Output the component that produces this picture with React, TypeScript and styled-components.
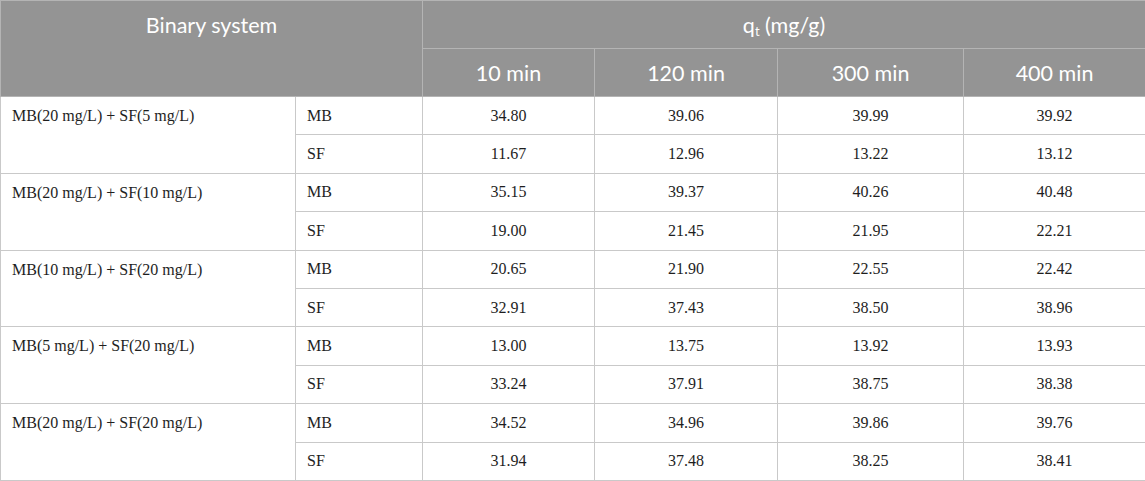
import React from "react";
import styled, { createGlobalStyle } from "styled-components";

const Global = createGlobalStyle`
  html, body { margin: 0; padding: 0; background: #ffffff; }
  #root { width: 1145px; }
`;

const Table = styled.table`
  width: 1145px;
  border-collapse: collapse;
  table-layout: fixed;
  border: 1px solid #c9c9c9;
`;

const HeadRow = styled.tr`
  height: 48px;
`;

const HeadCell = styled.th<{ $top?: boolean }>`
  background: #949494;
  color: #ffffff;
  font-family: Lato, "Liberation Sans", sans-serif;
  font-weight: 400;
  font-size: 21.5px;
  padding: ${(p) => (p.$top ? "11px 10px 0" : "0 10px")};
  box-sizing: border-box;
  text-align: center;
  vertical-align: ${(p) => (p.$top ? "top" : "middle")};
  border: 1px solid #b4b4b4;
  line-height: 26px;
`;

const Sub = styled.sub`
  font-size: 13px;
  vertical-align: -3px;
  line-height: 0;
`;

const Row = styled.tr`
  height: 38.4px;
`;

const Cell = styled.td<{ $center?: boolean }>`
  font-family: "Liberation Serif", "Times New Roman", serif;
  font-size: 16px;
  color: #1e1e1e;
  padding: 0 11px;
  box-sizing: border-box;
  border: 1px solid #c9c9c9;
  text-align: ${(p) => (p.$center ? "center" : "left")};
  vertical-align: middle;
  line-height: 20px;
`;

const GroupCell = styled(Cell)`
  vertical-align: top;
  padding-top: 9px;
`;

const groups = [
  {
    label: "MB(20 mg/L) + SF(5 mg/L)",
    rows: [
      ["MB", "34.80", "39.06", "39.99", "39.92"],
      ["SF", "11.67", "12.96", "13.22", "13.12"],
    ],
  },
  {
    label: "MB(20 mg/L) + SF(10 mg/L)",
    rows: [
      ["MB", "35.15", "39.37", "40.26", "40.48"],
      ["SF", "19.00", "21.45", "21.95", "22.21"],
    ],
  },
  {
    label: "MB(10 mg/L) + SF(20 mg/L)",
    rows: [
      ["MB", "20.65", "21.90", "22.55", "22.42"],
      ["SF", "32.91", "37.43", "38.50", "38.96"],
    ],
  },
  {
    label: "MB(5 mg/L) + SF(20 mg/L)",
    rows: [
      ["MB", "13.00", "13.75", "13.92", "13.93"],
      ["SF", "33.24", "37.91", "38.75", "38.38"],
    ],
  },
  {
    label: "MB(20 mg/L) + SF(20 mg/L)",
    rows: [
      ["MB", "34.52", "34.96", "39.86", "39.76"],
      ["SF", "31.94", "37.48", "38.25", "38.41"],
    ],
  },
];

export default function App() {
  return (
    <>
      <Global />
      <Table>
        <colgroup>
          <col style={{ width: 295 }} />
          <col style={{ width: 127 }} />
          <col style={{ width: 172 }} />
          <col style={{ width: 183 }} />
          <col style={{ width: 186 }} />
          <col style={{ width: 182 }} />
        </colgroup>
        <thead>
          <HeadRow>
            <HeadCell colSpan={2} rowSpan={2} $top>
              Binary system
            </HeadCell>
            <HeadCell colSpan={4}>
              q<Sub>t</Sub> (mg/g)
            </HeadCell>
          </HeadRow>
          <HeadRow>
            <HeadCell>10 min</HeadCell>
            <HeadCell>120 min</HeadCell>
            <HeadCell>300 min</HeadCell>
            <HeadCell>400 min</HeadCell>
          </HeadRow>
        </thead>
        <tbody>
          {groups.map((g) =>
            g.rows.map((r, i) => (
              <Row key={g.label + i}>
                {i === 0 && <GroupCell rowSpan={2}>{g.label}</GroupCell>}
                <Cell>{r[0]}</Cell>
                {r.slice(1).map((v, j) => (
                  <Cell key={j} $center>
                    {v}
                  </Cell>
                ))}
              </Row>
            ))
          )}
        </tbody>
      </Table>
    </>
  );
}
